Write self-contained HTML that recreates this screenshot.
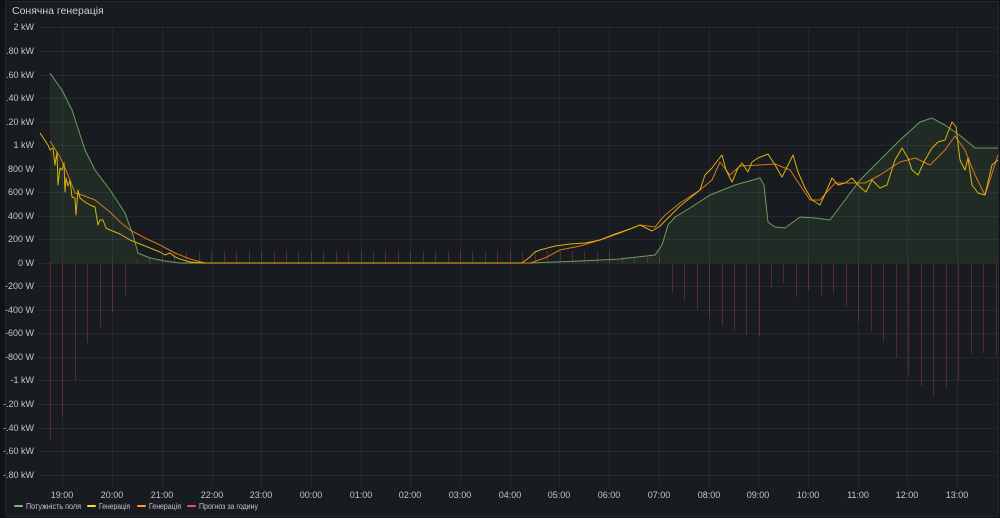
<!DOCTYPE html>
<html><head><meta charset="utf-8"><style>
html,body{margin:0;padding:0;background:#111217;width:1000px;height:518px;overflow:hidden;font-family:"Liberation Sans","DejaVu Sans",sans-serif}
.p{position:absolute;left:5px;top:1px;width:994px;height:516px;background:#181b1f;border:1px solid #24272e;border-radius:2px;box-sizing:border-box}
.t{position:absolute;left:12px;top:5px;font-size:10.5px;color:#ccccdc;font-weight:500}
svg{position:absolute;left:0;top:0}
text{font-family:"Liberation Sans","DejaVu Sans",sans-serif;fill:#c4c4d2}
</style></head><body>
<div class="p"></div>
<div class="t">Сонячна генерація</div>
<svg width="1000" height="518" viewBox="0 0 1000 518">
<g stroke="rgba(204,204,220,0.08)" stroke-width="1">
<line x1="38" x2="998" y1="27.5" y2="27.5"/><line x1="38" x2="998" y1="51.5" y2="51.5"/><line x1="38" x2="998" y1="75.5" y2="75.5"/><line x1="38" x2="998" y1="98.5" y2="98.5"/><line x1="38" x2="998" y1="122.5" y2="122.5"/><line x1="38" x2="998" y1="145.5" y2="145.5"/><line x1="38" x2="998" y1="169.5" y2="169.5"/><line x1="38" x2="998" y1="192.5" y2="192.5"/><line x1="38" x2="998" y1="216.5" y2="216.5"/><line x1="38" x2="998" y1="239.5" y2="239.5"/><line x1="38" x2="998" y1="263.5" y2="263.5"/><line x1="38" x2="998" y1="286.5" y2="286.5"/><line x1="38" x2="998" y1="310.5" y2="310.5"/><line x1="38" x2="998" y1="333.5" y2="333.5"/><line x1="38" x2="998" y1="357.5" y2="357.5"/><line x1="38" x2="998" y1="380.5" y2="380.5"/><line x1="38" x2="998" y1="404.5" y2="404.5"/><line x1="38" x2="998" y1="428.5" y2="428.5"/><line x1="38" x2="998" y1="451.5" y2="451.5"/><line x1="38" x2="998" y1="475.5" y2="475.5"/>
<line y1="27" y2="487" x1="62.5" x2="62.5"/><line y1="27" y2="487" x1="112.5" x2="112.5"/><line y1="27" y2="487" x1="162.5" x2="162.5"/><line y1="27" y2="487" x1="212.5" x2="212.5"/><line y1="27" y2="487" x1="261.5" x2="261.5"/><line y1="27" y2="487" x1="311.5" x2="311.5"/><line y1="27" y2="487" x1="361.5" x2="361.5"/><line y1="27" y2="487" x1="410.5" x2="410.5"/><line y1="27" y2="487" x1="460.5" x2="460.5"/><line y1="27" y2="487" x1="510.5" x2="510.5"/><line y1="27" y2="487" x1="559.5" x2="559.5"/><line y1="27" y2="487" x1="609.5" x2="609.5"/><line y1="27" y2="487" x1="659.5" x2="659.5"/><line y1="27" y2="487" x1="709.5" x2="709.5"/><line y1="27" y2="487" x1="758.5" x2="758.5"/><line y1="27" y2="487" x1="808.5" x2="808.5"/><line y1="27" y2="487" x1="858.5" x2="858.5"/><line y1="27" y2="487" x1="907.5" x2="907.5"/><line y1="27" y2="487" x1="957.5" x2="957.5"/>
</g>
<g font-size="9" text-anchor="end">
<text x="34" y="30">2 kW</text><text x="34" y="54">.80 kW</text><text x="34" y="78">.60 kW</text><text x="34" y="101">.40 kW</text><text x="34" y="125">.20 kW</text><text x="34" y="148">1 kW</text><text x="34" y="172">800 W</text><text x="34" y="195">600 W</text><text x="34" y="219">400 W</text><text x="34" y="242">200 W</text><text x="34" y="266">0 W</text><text x="34" y="289">-200 W</text><text x="34" y="313">-400 W</text><text x="34" y="336">-600 W</text><text x="34" y="360">-800 W</text><text x="34" y="383">-1 kW</text><text x="34" y="407">-.20 kW</text><text x="34" y="431">-.40 kW</text><text x="34" y="454">-.60 kW</text><text x="34" y="478">-.80 kW</text>
</g>
<g font-size="9" text-anchor="middle">
<text x="62" y="498">19:00</text><text x="112" y="498">20:00</text><text x="162" y="498">21:00</text><text x="212" y="498">22:00</text><text x="261" y="498">23:00</text><text x="311" y="498">00:00</text><text x="361" y="498">01:00</text><text x="410" y="498">02:00</text><text x="460" y="498">03:00</text><text x="510" y="498">04:00</text><text x="559" y="498">05:00</text><text x="609" y="498">06:00</text><text x="659" y="498">07:00</text><text x="709" y="498">08:00</text><text x="758" y="498">09:00</text><text x="808" y="498">10:00</text><text x="858" y="498">11:00</text><text x="907" y="498">12:00</text><text x="957" y="498">13:00</text>
</g>
<g stroke="rgba(242,73,92,0.3)" stroke-width="1">
<line x1="50.5" x2="50.5" y1="263" y2="440"/><line x1="62.5" x2="62.5" y1="263" y2="417"/><line x1="75.5" x2="75.5" y1="263" y2="380"/><line x1="87.5" x2="87.5" y1="263" y2="343"/><line x1="100.5" x2="100.5" y1="263" y2="327"/><line x1="112.5" x2="112.5" y1="263" y2="312"/><line x1="125.5" x2="125.5" y1="263" y2="295"/>
<path d="M137.5 263V259M149.5 263V257M162.5 263V255M174.5 263V252M186.5 263V251M199.5 263V251M211.5 263V251M224.5 263V251M236.5 263V251M249.5 263V251M261.5 263V251M274.5 263V251M286.5 263V251M298.5 263V251M311.5 263V251M323.5 263V251M336.5 263V251M348.5 263V251M361.5 263V251M373.5 263V251M385.5 263V251M398.5 263V251M410.5 263V251M423.5 263V251M435.5 263V251M448.5 263V251M460.5 263V251M472.5 263V251M485.5 263V251M497.5 263V251M510.5 263V251M522.5 263V251M535.5 263V251M547.5 263V251M560.5 263V251M572.5 263V251M584.5 263V251M597.5 263V251M609.5 263V251M622.5 263V257M634.5 263V257M647.5 263V257M659.5 263V257"/>
<path d="M672.5 263V293M684.5 263V300M697.5 263V310M709.5 263V318M722.5 263V326M734.5 263V331M746.5 263V335M759.5 263V336M771.5 263V287M783.5 263V283M796.5 263V297M808.5 263V290M821.5 263V296M833.5 263V293M846.5 263V307M858.5 263V322M871.5 263V331M883.5 263V342M896.5 263V358M908.5 263V375M921.5 263V386M933.5 263V396M946.5 263V388M958.5 263V380M971.5 263V354M983.5 263V353M996.5 263V355"/>
</g>
<path d="M50 73 L62 90 L72 110 L85 150 L95 170 L110 190 L125 213 L133 235 L138 253 L150 258 L165 261 L180 263 L530 263 L580 261 L620 259 L655 255 L662 245 L668 225 L675 217 L690 208 L710 195 L735 185 L760 178 L764 185 L768 222 L775 227 L785 228 L800 217 L815 218 L830 220 L845 200 L860 180 L880 160 L900 140 L920 122 L932 118 L945 125 L962 137 L975 148 L998 148 L998 263 L50 263 Z" fill="rgba(115,191,105,0.1)" stroke="none"/>
<polyline fill="none" stroke="#6a9e5c" stroke-width="1" points="50,73 62,90 72,110 85,150 95,170 110,190 125,213 133,235 138,253 150,258 165,261 180,263 530,263 580,261 620,259 655,255 662,245 668,225 675,217 690,208 710,195 735,185 760,178 764,185 768,222 775,227 785,228 800,217 815,218 830,220 845,200 860,180 880,160 900,140 920,122 932,118 945,125 962,137 975,148 998,148"/>
<polyline fill="none" stroke="#d9761e" stroke-width="1" stroke-linejoin="round" points="50,141 60,157 68,175 75,193 82,195 95,200 110,212 120,222 130,230 145,238 160,245 175,253 190,259 205,263 530,263 545,258 560,250 580,246 600,240 620,233 640,225 655,227 665,215 680,203 700,190 712,180 720,162 730,175 740,166 760,165 775,164 790,170 800,185 810,200 820,200 835,183 850,183 865,183 880,175 900,162 915,158 930,165 945,150 955,136 965,150 975,175 985,195 998,155"/>
<polyline fill="none" stroke="#d8b40c" stroke-width="1" stroke-linejoin="round" points="40,133 48,145 50,150 53,148 55,165 57,152 58,185 60,168 62,170 64,163 65,192 66,178 68,186 70,180 72,197 75,198 76,215 78,190 80,198 85,202 90,205 95,207 98,225 100,220 103,220 106,228 110,230 115,232 120,234 125,237 130,240 140,244 150,248 160,252 165,255 170,253 175,257 180,259 190,262 205,263 522,263 530,257 535,252 540,250 555,246 570,244 585,243 600,240 615,234 630,229 640,225 648,229 652,231 660,226 668,218 680,206 690,198 700,190 705,175 712,168 718,160 722,155 726,170 732,182 738,168 742,163 748,172 752,162 758,158 768,154 775,165 782,177 788,165 793,155 798,172 805,188 812,200 820,205 826,192 832,178 838,185 845,183 852,178 860,187 866,192 872,180 880,188 887,185 895,160 902,148 908,158 912,170 918,175 925,160 932,148 938,142 945,140 952,122 956,127 960,160 965,170 968,158 972,185 978,193 985,195 992,165 998,160"/>
<g font-size="8.5">
<rect x="14" y="505" width="9" height="2" rx="1" fill="#73bf69"/><text x="26" y="509" textLength="55" lengthAdjust="spacingAndGlyphs">Потужність поля</text>
<rect x="87" y="505" width="9" height="2" rx="1" fill="#fade2a"/><text x="99" y="509" textLength="31" lengthAdjust="spacingAndGlyphs">Генерація</text>
<rect x="137" y="505" width="9" height="2" rx="1" fill="#ff9830"/><text x="149" y="509" textLength="32" lengthAdjust="spacingAndGlyphs">Генерація</text>
<rect x="187" y="505" width="9" height="2" rx="1" fill="#f2495c"/><text x="199" y="509" textLength="59" lengthAdjust="spacingAndGlyphs">Прогноз за годину</text>
</g>
</svg>
</body></html>
